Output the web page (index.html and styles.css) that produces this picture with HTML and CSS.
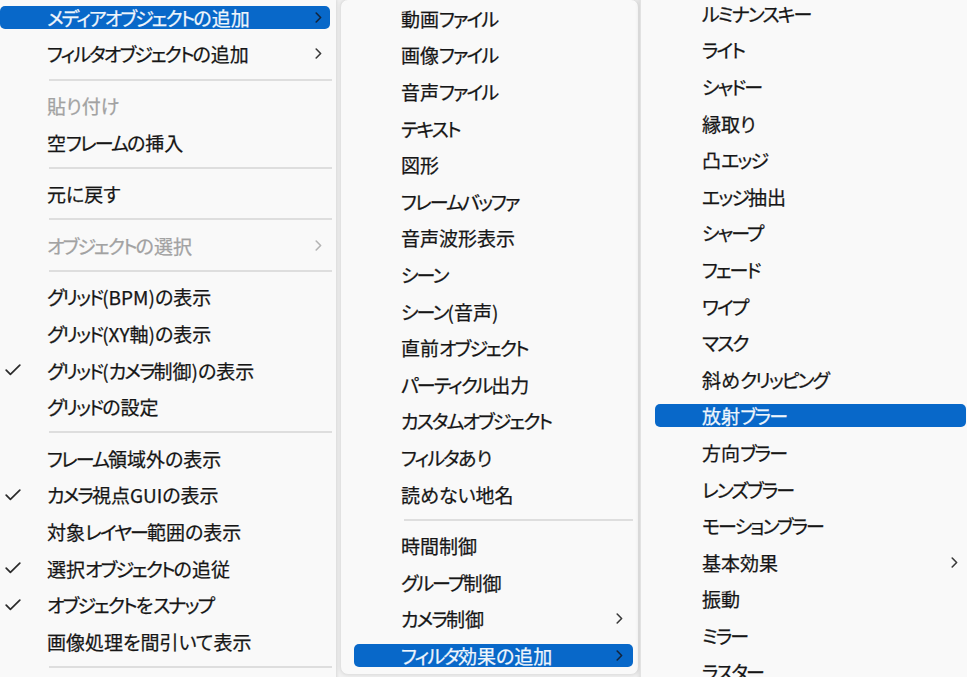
FILE: index.html
```html
<!DOCTYPE html>
<html lang="ja">
<head>
<meta charset="utf-8">
<title>メニュー</title>
<link rel="stylesheet" href="styles.css">
</head>
<body>
<div class="screen">
  <div class="menu m1">
    <div class="item"><div class="row hl"><span class="chk"></span><span class="lbl"><span class="k">メディアオブジェクト</span>の追加</span><svg class="arr" viewBox="0 0 7 11" width="7" height="11"><path d="M1.2 1 L5.6 5.5 L1.2 10"/></svg></div></div>
    <div class="item"><div class="row"><span class="chk"></span><span class="lbl"><span class="k">フィルタオブジェクト</span>の追加</span><svg class="arr" viewBox="0 0 7 11" width="7" height="11"><path d="M1.2 1 L5.6 5.5 L1.2 10"/></svg></div></div>
    <div class="sep"><i></i></div>
    <div class="item"><div class="row dis"><span class="chk"></span><span class="lbl">貼り付け</span></div></div>
    <div class="item"><div class="row"><span class="chk"></span><span class="lbl">空<span class="k">フレーム</span>の挿入</span></div></div>
    <div class="sep"><i></i></div>
    <div class="item"><div class="row"><span class="chk"></span><span class="lbl">元に戻す</span></div></div>
    <div class="sep"><i></i></div>
    <div class="item"><div class="row dis"><span class="chk"></span><span class="lbl"><span class="k">オブジェクト</span>の選択</span><svg class="arr" viewBox="0 0 7 11" width="7" height="11"><path d="M1.2 1 L5.6 5.5 L1.2 10"/></svg></div></div>
    <div class="sep"><i></i></div>
    <div class="item"><div class="row"><span class="chk"></span><span class="lbl"><span class="k">グリッド</span>(BPM)の表示</span></div></div>
    <div class="item"><div class="row"><span class="chk"></span><span class="lbl"><span class="k">グリッド</span>(XY軸)の表示</span></div></div>
    <div class="item"><div class="row"><span class="chk"><svg viewBox="0 0 16 12" width="16" height="12"><path d="M1.2 6.2 L5.4 10.4 L14.8 1.2"/></svg></span><span class="lbl"><span class="k">グリッド</span>(<span class="k">カメラ</span>制御)の表示</span></div></div>
    <div class="item"><div class="row"><span class="chk"></span><span class="lbl"><span class="k">グリッド</span>の設定</span></div></div>
    <div class="sep"><i></i></div>
    <div class="item"><div class="row"><span class="chk"></span><span class="lbl"><span class="k">フレーム</span>領域外の表示</span></div></div>
    <div class="item"><div class="row"><span class="chk"><svg viewBox="0 0 16 12" width="16" height="12"><path d="M1.2 6.2 L5.4 10.4 L14.8 1.2"/></svg></span><span class="lbl"><span class="k">カメラ</span>視点GUIの表示</span></div></div>
    <div class="item"><div class="row"><span class="chk"></span><span class="lbl">対象<span class="k">レイヤー</span>範囲の表示</span></div></div>
    <div class="item"><div class="row"><span class="chk"><svg viewBox="0 0 16 12" width="16" height="12"><path d="M1.2 6.2 L5.4 10.4 L14.8 1.2"/></svg></span><span class="lbl">選択<span class="k">オブジェクト</span>の追従</span></div></div>
    <div class="item"><div class="row"><span class="chk"><svg viewBox="0 0 16 12" width="16" height="12"><path d="M1.2 6.2 L5.4 10.4 L14.8 1.2"/></svg></span><span class="lbl"><span class="k">オブジェクト</span>を<span class="k">スナップ</span></span></div></div>
    <div class="item"><div class="row"><span class="chk"></span><span class="lbl">画像処理を間引いて表示</span></div></div>
    <div class="sep"><i></i></div>
  </div>

  <div class="menu m2">
    <div class="item"><div class="row"><span class="chk"></span><span class="lbl">動画<span class="k">ファイル</span></span></div></div>
    <div class="item"><div class="row"><span class="chk"></span><span class="lbl">画像<span class="k">ファイル</span></span></div></div>
    <div class="item"><div class="row"><span class="chk"></span><span class="lbl">音声<span class="k">ファイル</span></span></div></div>
    <div class="item"><div class="row"><span class="chk"></span><span class="lbl"><span class="k">テキスト</span></span></div></div>
    <div class="item"><div class="row"><span class="chk"></span><span class="lbl">図形</span></div></div>
    <div class="item"><div class="row"><span class="chk"></span><span class="lbl"><span class="k">フレームバッファ</span></span></div></div>
    <div class="item"><div class="row"><span class="chk"></span><span class="lbl">音声波形表示</span></div></div>
    <div class="item"><div class="row"><span class="chk"></span><span class="lbl"><span class="k">シーン</span></span></div></div>
    <div class="item"><div class="row"><span class="chk"></span><span class="lbl"><span class="k">シーン</span>(音声)</span></div></div>
    <div class="item"><div class="row"><span class="chk"></span><span class="lbl">直前<span class="k">オブジェクト</span></span></div></div>
    <div class="item"><div class="row"><span class="chk"></span><span class="lbl"><span class="k">パーティクル</span>出力</span></div></div>
    <div class="item"><div class="row"><span class="chk"></span><span class="lbl"><span class="k">カスタムオブジェクト</span></span></div></div>
    <div class="item"><div class="row"><span class="chk"></span><span class="lbl"><span class="k">フィルタ</span>あり</span></div></div>
    <div class="item"><div class="row"><span class="chk"></span><span class="lbl">読めない地名</span></div></div>
    <div class="sep"><i></i></div>
    <div class="item"><div class="row"><span class="chk"></span><span class="lbl">時間制御</span></div></div>
    <div class="item"><div class="row"><span class="chk"></span><span class="lbl"><span class="k">グループ</span>制御</span></div></div>
    <div class="item"><div class="row"><span class="chk"></span><span class="lbl"><span class="k">カメラ</span>制御</span><svg class="arr" viewBox="0 0 7 11" width="7" height="11"><path d="M1.2 1 L5.6 5.5 L1.2 10"/></svg></div></div>
    <div class="item"><div class="row hl"><span class="chk"></span><span class="lbl"><span class="k">フィルタ</span>効果の追加</span><svg class="arr" viewBox="0 0 7 11" width="7" height="11"><path d="M1.2 1 L5.6 5.5 L1.2 10"/></svg></div></div>
  </div>

  <div class="menu m3">
    <div class="item"><div class="row"><span class="chk"></span><span class="lbl"><span class="k">ルミナンスキー</span></span></div></div>
    <div class="item"><div class="row"><span class="chk"></span><span class="lbl"><span class="k">ライト</span></span></div></div>
    <div class="item"><div class="row"><span class="chk"></span><span class="lbl"><span class="k">シャドー</span></span></div></div>
    <div class="item"><div class="row"><span class="chk"></span><span class="lbl">縁取り</span></div></div>
    <div class="item"><div class="row"><span class="chk"></span><span class="lbl">凸<span class="k">エッジ</span></span></div></div>
    <div class="item"><div class="row"><span class="chk"></span><span class="lbl"><span class="k">エッジ</span>抽出</span></div></div>
    <div class="item"><div class="row"><span class="chk"></span><span class="lbl"><span class="k">シャープ</span></span></div></div>
    <div class="item"><div class="row"><span class="chk"></span><span class="lbl"><span class="k">フェード</span></span></div></div>
    <div class="item"><div class="row"><span class="chk"></span><span class="lbl"><span class="k">ワイプ</span></span></div></div>
    <div class="item"><div class="row"><span class="chk"></span><span class="lbl"><span class="k">マスク</span></span></div></div>
    <div class="item"><div class="row"><span class="chk"></span><span class="lbl">斜め<span class="k">クリッピング</span></span></div></div>
    <div class="item"><div class="row hl"><span class="chk"></span><span class="lbl">放射<span class="k">ブラー</span></span></div></div>
    <div class="item"><div class="row"><span class="chk"></span><span class="lbl">方向<span class="k">ブラー</span></span></div></div>
    <div class="item"><div class="row"><span class="chk"></span><span class="lbl"><span class="k">レンズブラー</span></span></div></div>
    <div class="item"><div class="row"><span class="chk"></span><span class="lbl"><span class="k">モーションブラー</span></span></div></div>
    <div class="item"><div class="row"><span class="chk"></span><span class="lbl">基本効果</span><svg class="arr" viewBox="0 0 7 11" width="7" height="11"><path d="M1.2 1 L5.6 5.5 L1.2 10"/></svg></div></div>
    <div class="item"><div class="row"><span class="chk"></span><span class="lbl">振動</span></div></div>
    <div class="item"><div class="row"><span class="chk"></span><span class="lbl"><span class="k">ミラー</span></span></div></div>
    <div class="item"><div class="row"><span class="chk"></span><span class="lbl"><span class="k">ラスター</span></span></div></div>
  </div>
</div>
</body>
</html>
```

FILE: styles.css
```css
html, body {
  margin: 0;
  padding: 0;
}
body {
  width: 967px;
  height: 677px;
  overflow: hidden;
  background: #f1f1f1;
  font-family: "Noto Sans CJK JP", sans-serif;
  font-size: 19px;
  color: #161616;
}
.screen {
  display: flex;
  align-items: flex-start;
  height: 677px;
  overflow: hidden;
}
.menu {
  flex: none;
  display: flex;
  flex-direction: column;
  background: #f9f9f9;
  box-sizing: border-box;
}
.m1 {
  width: 351px;
  margin-left: -15px;
  margin-top: -1px;
  height: 700px;
  padding: 0 6px 0 15px;
  box-shadow: 1px 0 3px rgba(0, 0, 0, 0.10);
}
.m2 {
  width: 299px;
  height: 676px;
  margin-left: 4px;
  margin-top: -1px;
  padding: 0 5px 0 13px;
  border: 1px solid #e2e2e2;
  border-radius: 8px;
  box-shadow: 0 0 4px rgba(0, 0, 0, 0.10);
  position: relative;
  z-index: 1;
}
.m3 {
  width: 332px;
  height: 720px;
  margin-left: 1px;
  margin-top: -5px;
  padding: 0 6px 0 14px;
  border-left: 1px solid #e2e2e2;
  box-shadow: -1px 0 4px rgba(0, 0, 0, 0.10);
  position: relative;
  z-index: 2;
}
.item {
  flex: none;
  height: 36.6px;
  display: flex;
  align-items: center;
}
.row {
  width: 100%;
  height: 23px;
  border-radius: 5px;
  display: grid;
  grid-template-columns: 47px 1fr auto;
  align-items: center;
  line-height: 23px;
  white-space: nowrap;
}
.chk {
  display: flex;
  align-items: center;
  padding-left: 5px;
}
.chk svg {
  fill: none;
  stroke: #2b2b2b;
  stroke-width: 1.7;
  stroke-linecap: round;
  stroke-linejoin: round;
}
.lbl {
  display: block;
  font-feature-settings: "palt" 1;
  font-variant-east-asian: proportional-width;
  -webkit-text-stroke: 0.25px currentColor;
}
.k {
  letter-spacing: -1.9px;
}
.arr {
  margin-right: 8px;
  fill: none;
  stroke: #3a3a3a;
  stroke-width: 1.6;
  stroke-linecap: round;
  stroke-linejoin: round;
}
.m2 .arr {
  margin-right: 10px;
}
.hl {
  background: #0868c9;
  color: #eef5fc;
}
.hl .arr {
  stroke: #13233a;
}
.dis {
  color: #a2a2a2;
}
.dis .arr {
  stroke: #b4b4b4;
}
.sep {
  flex: none;
  height: 15px;
  display: flex;
  align-items: center;
}
.sep i {
  display: block;
  height: 2px;
  background: #dedede;
  margin-left: 49px;
  flex: 1;
}
.m1 .sep i {
  margin-right: -2px;
}
.m2 .sep i {
  margin-left: 50px;
}
```
